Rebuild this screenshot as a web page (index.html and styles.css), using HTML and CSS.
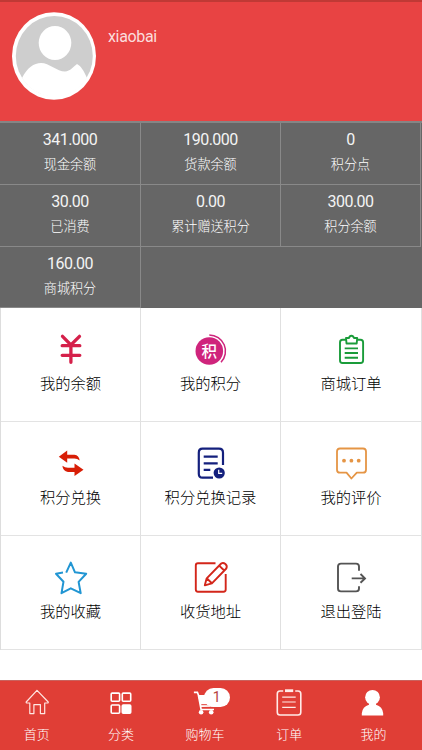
FILE: index.html
```html
<!DOCTYPE html>
<html lang="zh-CN">
<head>
<meta charset="utf-8">
<title>我的</title>
<link rel="stylesheet" href="styles.css">
</head>
<body>
<div class="page">
  <header class="profile">
    <svg class="avatar" viewBox="0 0 84 88">
      <ellipse cx="42" cy="44" rx="42" ry="43.8" fill="#fff"/>
      <ellipse cx="42.3" cy="44" rx="38.5" ry="40" fill="#cecece"/>
      <ellipse cx="43" cy="31" rx="16.3" ry="17" fill="#fff"/>
      <path d="M10 66C15 56 22 51 29 51c8 0 16 8.500 24 8.500C58 59.500 62 54 65 52c4 2 7 7 10 14A38.500 40 0 0 1 10 66z" fill="#fff"/>
    </svg>
    <span class="username">xiaobai</span>
  </header>

  <section class="stats">
    <div class="stat"><b>341.000</b><span>现金余额</span></div>
    <div class="stat"><b>190.000</b><span>货款余额</span></div>
    <div class="stat"><b>0</b><span>积分点</span></div>
    <div class="stat"><b>30.00</b><span>已消费</span></div>
    <div class="stat"><b>0.00</b><span>累计赠送积分</span></div>
    <div class="stat"><b>300.00</b><span>积分余额</span></div>
    <div class="stat"><b>160.00</b><span>商城积分</span></div>
  </section>

  <section class="menu">
    <a class="item">
      <svg viewBox="0 0 36 36" fill="none" stroke="#d5204a" stroke-width="3.300" stroke-linecap="round"><path d="M9.500 4.300L17.900 13l8.600-8.700M9.200 13.700h17.600M9.200 23.300h17.600M17.900 13v17.300"/></svg>
      <span>我的余额</span>
    </a>
    <a class="item">
      <svg viewBox="0 0 36 36"><circle cx="16.300" cy="19" r="13.800" fill="#cf247c"/><path d="M16.300 2.900A16.200 16.200 0 0 1 28 30.300" fill="none" stroke="#cf247c" stroke-width="1.500"/><text class="seal" x="16.300" y="24.600" text-anchor="middle">积</text></svg>
      <span>我的积分</span>
    </a>
    <a class="item">
      <svg viewBox="0 0 36 36" fill="none" stroke="#1a9c3a" stroke-width="1.900" stroke-linejoin="round"><path d="M13 7.800H9.500Q7 7.800 7 10.500v17.700Q7 31 9.500 31h18q2.600 0 2.600-2.800V10.500q0-2.700-2.600-2.700H24M13 6h3q.5-2.300 2.400-2.300T21 6h3.200l-.5 5.500H13.500zM11.700 16.400H25M11.700 21H25M11.700 25.700H25"/></svg>
      <span>商城订单</span>
    </a>
    <a class="item">
      <svg viewBox="0 0 36 36" fill="#d81e06"><path d="M5.800 10.700l8.400-6.200v4.200h7.300q4.500.5 5.200 5.800-2.500-2-5.200-2h-7.300v4.300zM30.500 23.800l-9-6.200v4.100h-6.500q-3 0-5.600-2 .5 5.600 5.600 6.200h6.500v4.200z"/></svg>
      <span>积分兑换</span>
    </a>
    <a class="item">
      <svg viewBox="0 0 36 36" fill="none" stroke="#14207d" stroke-width="2.200"><path d="M30 19V6.700q0-4-4-4H9.500q-3.700 0-3.700 4v21q0 4 3.700 4H20M10.700 10.700h14M10.700 17.300h14M10.700 23.800h6.600"/><circle cx="26.200" cy="27" r="5.600" fill="#14207d" stroke="none"/><path d="M25.700 23.700v3.600h3.500" stroke="#fff" stroke-width="1.200"/></svg>
      <span>积分兑换记录</span>
    </a>
    <a class="item">
      <svg viewBox="0 0 36 36" fill="none" stroke="#e59545" stroke-width="1.800" stroke-linejoin="round"><path d="M7 2.500h23q3 0 3 3v18.200q0 3-3 3h-6.200l-5.400 5.800-4.900-5.800H7q-3 0-3-3V5.500q0-3 3-3z"/><g fill="#e59545" stroke="none"><circle cx="11" cy="14.700" r="1.900"/><circle cx="18.400" cy="14.700" r="1.900"/><circle cx="25.700" cy="14.700" r="1.900"/></g></svg>
      <span>我的评价</span>
    </a>
    <a class="item">
      <svg viewBox="0 0 36 36" fill="none" stroke="#2296d3" stroke-width="2" stroke-linejoin="round"><path d="M13.200 12.600l4.600-10 4.200 9.700 11.200 1.400-7.600 8.200 2.100 11.300-9.900-4.900-9.300 4.900 2-11.500-7.500-8 7-1.100"/></svg>
      <span>我的收藏</span>
    </a>
    <a class="item">
      <svg viewBox="0 0 36 36" fill="none" stroke="#d3261a" stroke-width="1.900" stroke-linejoin="round"><path d="M22.500 3.300H5Q2.800 3.300 2.800 5.500v24Q2.800 31.700 5 31.700h25.500q2.200 0 2.200-2.200V14M11.800 25.300l1.900-7L28.200 3.500q2-1.400 4.200.5t.9 4.500L18.900 23.300zM13.700 18.300l5.200 5M26.200 5.600l5 4.900"/></svg>
      <span>收货地址</span>
    </a>
    <a class="item">
      <svg viewBox="0 0 36 36" fill="none" stroke="#545454" stroke-width="1.900"><path d="M26 10.700V6.500q0-2.900-3-2.900H8q-3 0-3 2.900v22q0 2.900 3 2.900h15q3 0 3-2.900v-2.300M18.700 18.400h13M27.500 14l4.500 4.400-4.500 4.400"/></svg>
      <span>退出登陆</span>
    </a>
  </section>

  <nav class="tabbar">
    <a class="tab">
      <svg viewBox="0 0 32 32" fill="none" stroke="#ffe6e2" stroke-width="1.200" stroke-linejoin="round"><path d="M16 3.300L5.200 15q-.2 1 1 1h2.600v10.600h4.100v-9h6.500v9h4.300V16h2.500q1.400 0 1-1z"/></svg>
      <span>首页</span>
    </a>
    <a class="tab">
      <svg viewBox="0 0 32 32" fill="none" stroke="#fff" stroke-width="1.600"><rect x="6.200" y="6.100" width="8.400" height="8.200" rx="1"/><rect x="17.300" y="6.100" width="8.400" height="8.200" rx="1"/><rect x="6.200" y="18" width="8.400" height="8.200" rx="1"/><rect x="17.300" y="18" width="8.400" height="8.200" rx="1" fill="#fff"/></svg>
      <span>分类</span>
    </a>
    <a class="tab">
      <svg viewBox="0 0 32 32"><path d="M4.900 5.300h3.500l1 2.700 2.700 14.500H25" fill="none" stroke="#fff" stroke-width="1.700"/><path d="M9 8h19l-3 11.800-13.200.2z" fill="#fff"/><path d="M12.300 17.700h7.500l2 1.300" fill="none" stroke="#e03e36" stroke-width="1"/><circle cx="12.100" cy="25.300" r="2.300" fill="#fff"/><circle cx="22.200" cy="25.300" r="2.300" fill="#fff"/></svg>
      <i class="badge">1</i>
      <span>购物车</span>
    </a>
    <a class="tab">
      <svg viewBox="0 0 32 32" fill="none" stroke="#ffebe8" stroke-width="1.600"><path d="M10.200 4H7Q4.300 4 4.300 6.700v18.500Q4.300 28 7 28h18q2.800 0 2.800-2.800V6.700Q27.800 4 25 4h-2.800"/><path d="M12 3.700h8.200" stroke-width="2.800"/><path d="M9.200 10.100h13.500M9.200 15h13.500M9.200 20.300h13.500" stroke-width="1.200"/></svg>
      <span>订单</span>
    </a>
    <a class="tab">
      <svg viewBox="0 0 32 32" fill="#fff"><circle cx="15.500" cy="10.300" r="7.400"/><path d="M12 15.500h7v2.200q6.500 1.800 7.200 8.500v2.200H4.800v-2.200Q5.500 19.500 12 17.700z"/></svg>
      <span>我的</span>
    </a>
  </nav>
</div>
</body>
</html>
```
FILE: styles.css
```css
* {
  box-sizing: border-box;
}

body {
  margin: 0;
  background: #fff;
  font-family: Roboto, "Noto Sans CJK SC", sans-serif;
}

.page {
  display: flex;
  flex-direction: column;
  width: 422px;
  height: 750px;
  overflow: hidden;
}

.profile {
  display: flex;
  gap: 12px;
  height: 121px;
  padding: 10px 12px;
  border-top: 2px solid #c03935;
  background: #e84343;
}

.avatar {
  width: 84px;
  height: 88px;
}

.username {
  margin-top: 15px;
  color: #fbdcdc;
  font-size: 16px;
  line-height: 20px;
  letter-spacing: -0.35px;
}

.stats {
  display: grid;
  grid-template-columns: 141px 140px 140px;
  grid-template-rows: 62px 62px 61px;
  height: 187px;
  border-top: 2px solid #858585;
  background: #666;
}

.stat {
  display: flex;
  flex-direction: column;
  align-items: center;
  padding-top: 6px;
  border-right: 1px solid #898989;
  border-bottom: 1px solid #898989;
  color: #fff;
}

.stat b {
  color: #f4f4f4;
  font-size: 16px;
  font-weight: 400;
  line-height: 22px;
  letter-spacing: -0.5px;
}

.stat span {
  margin-top: 3px;
  font-size: 13.1px;
  font-weight: 300;
  line-height: 22px;
}

.menu {
  display: grid;
  grid-template-columns: 140px 140px 141px;
  grid-auto-rows: 114px;
  height: 342px;
  border-left: 1px solid #ddd;
}

.item {
  display: flex;
  flex-direction: column;
  align-items: center;
  padding-top: 24px;
  border-right: 1px solid #e0e0e0;
  border-bottom: 1px solid #e3e3e3;
  color: #000;
}

.item svg {
  width: 36px;
  height: 36px;
}

.item span {
  margin-top: 4px;
  font-size: 15.3px;
  font-weight: 300;
  line-height: 24px;
  white-space: nowrap;
}

.seal {
  fill: #fff;
  font-size: 15.5px;
  font-weight: 500;
}

.tabbar {
  display: grid;
  grid-template-columns: repeat(5, 84.2px);
  height: 70px;
  margin-top: 30px;
  padding-top: 6px;
  border-top: 1px solid #c9625d;
  background: #e03e36;
}

.tab {
  position: relative;
  display: flex;
  flex-direction: column;
  align-items: center;
  margin-left: -10.8px;
  color: #fff;
}

.tab svg {
  width: 32px;
  height: 32px;
}

.tab span {
  margin-top: 5px;
  font-size: 13px;
  font-weight: 300;
  line-height: 22px;
}

.badge {
  position: absolute;
  top: 1px;
  left: 46px;
  width: 26px;
  height: 19px;
  border-radius: 10px;
  background: #fff;
  color: #b5443e;
  font-size: 14px;
  font-style: normal;
  line-height: 18px;
  text-align: center;
}
```
